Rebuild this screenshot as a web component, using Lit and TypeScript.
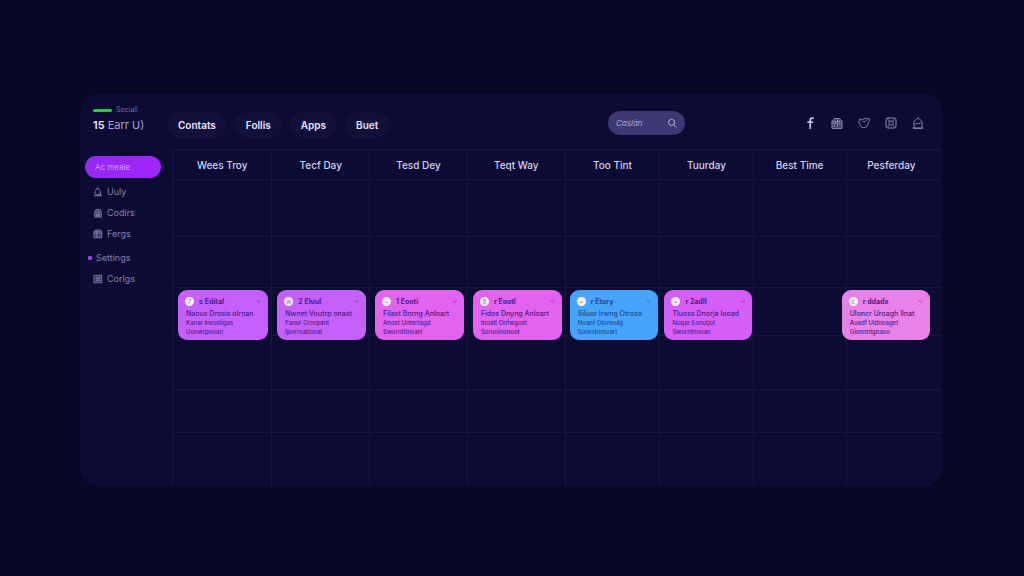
import { LitElement, html, css, svg } from "lit";
import { customElement, property } from "lit/decorators.js";

interface Entry {
  day: string;
  tone?: string;
  mark?: string;
  title?: string;
  lines?: string[];
}

const week: Entry[] = [
  { day: "Wees Troy", tone: "violet", mark: "7", title: "c Edital", lines: ["Naous Drosis olrnan", "Kanar Invosligas", "Uonwrpnoan"] },
  { day: "Tecf Day", tone: "violet", mark: "w", title: "2 Eluul", lines: ["Nwnet Voutrp onast", "Fanor Ornrpant", "Iporrnatlonat"] },
  { day: "Tesd Dey", tone: "orchid", mark: "~", title: "1 Eooti", lines: ["Filast Bnrng Anloart", "Anost Untertagd", "Sworntltnoart"] },
  { day: "Teqt Way", tone: "orchid", mark: "8", title: "r Eootl", lines: ["Fidos Dnyng Anloart", "Inoatt Onfwgost", "Soruoinonoot"] },
  { day: "Too Tint", tone: "blue", mark: "•", title: "r Etory", lines: ["Siluor Irwng Otroso", "Noanf Otoneulg", "Sonrntnmoart"] },
  { day: "Tuurday", tone: "pinkviolet", mark: "•", title: "r 2adll", lines: ["Tluoss Dnorja looad", "Noqar Eonutjol", "Sworntnnoan"] },
  { day: "Best Time" },
  { day: "Pesferday", tone: "rose", mark: "c", title: "r ddadx", lines: ["Uloncr Uroagh Ilnat", "Auadf Uldnoaget", "Gionnntgnaoo"] },
];

const icons: Record<string, unknown> = {
  bell: svg`<path d="M2.500 8.800V5.500a3.200 3.200 0 0 1 6-1.500l.8 4.800zM1.500 10.500h9M5 2V1h1.500M7 10.500V8.300h2"/>`,
  home: svg`<path fill="currentColor" fill-opacity=".45" d="M2 10.500V5.500a4 4 0 0 1 8 0v5zM4 10V7.200h1.500V10M6.500 10V7.200H8V10M4 4.800h4"/>`,
  board: svg`<path fill="currentColor" fill-opacity=".45" d="M1.500 2.500h9v8h-9zM1.500 5h9M4.500 2.500v8M3 1.200h6.500"/>`,
  list: svg`<path fill="currentColor" fill-opacity=".35" d="M1.500 1.500h9v9h-9zM3.500 4h5M3.500 6h5M3.500 8h5"/>`,
  search: svg`<circle cx="5.500" cy="5.200" r="3.700"/><path d="M8.200 7.900 11 11"/>`,
  face: svg`<path stroke-width="1.700" d="M9 1.200H7.900C6.700 1.200 6.200 2 6.200 3v8.500M4 5.200h4.500"/>`,
  globe: svg`<path fill="currentColor" fill-opacity=".4" d="M1 11V4.500L3.500 1.500h5L11 4v7z"/><path d="M3 4.500h2v2H3zM6.500 3v6.500M6.500 4h2.300v4M3.500 8.500v1"/>`,
  bird: svg`<path d="M2 2.200c1.200.7 2.200.6 3.300-.2 1.200-.8 2.700-.6 3.500 0l2.500-.2c.4 1.400 0 2.500-1 3.400C10.200 8.500 8.300 10.600 5.800 10.600 3.600 10.600 2 9 2 6.800.9 6.300.5 5.200.8 4.200c.7-.2 1-.8 1.200-2zM5 4.400c1 .4 2.300.2 3.300-.8"/>`,
  camera: svg`<rect x="1" y="1" width="10" height="10" rx="2"/><rect x="4" y="4" width="4" height="4" rx=".8"/><path d="M3 3h.7M8.300 3H9M3 9h.7M8.300 9H9"/>`,
  tray: svg`<path d="M2 11V4.500L4.500 2 6 1l1.500 1L10 4.500V11zM1 11h10M3.800 7.300l1.500-1.500 1.300 1.500L8.200 5.500"/>`,
};

const icon = (name: string) =>
  html`<svg class="icon" viewBox="0 0 12 12" fill="none" stroke="currentColor" stroke-width="1" stroke-linejoin="round" stroke-linecap="round" aria-hidden="true">${icons[name]}</svg>`;

@customElement("event-card")
class EventCard extends LitElement {
  @property({ attribute: false }) entry!: Entry;

  static styles = css`
    :host { display: block; }
    .card {
      box-sizing: border-box;
      height: 50px;
      padding: 5px 7px 0 7px;
      border-radius: 9px;
      color: #4b1a88;
      font-size: 6px;
      line-height: 9px;
      white-space: nowrap;
      overflow: hidden;
    }
    .violet { background: #c560fb; }
    .orchid { background: #e163ee; }
    .blue { background: #48a4fb; color: #174a90; }
    .pinkviolet { background: #d55ff6; }
    .rose { background: #e982e8; }
    .head { display: flex; align-items: center; height: 12px; gap: 5px; margin-bottom: 2px; }
    .mark {
      width: 9px; height: 9px; border-radius: 50%;
      background: #fbf0ff; color: #9a6fd0;
      font-size: 6px; line-height: 9px; text-align: center;
    }
    .title { flex: 1; font-size: 7px; font-weight: 700; }
    .more { width: 5px; height: 5px; fill: none; stroke: currentColor; opacity: .5; }
    .text { margin: 0; padding-left: 1px; font-weight: 500; font-size: 7px; }
    .soft { font-size: 6px; }
  `;

  render() {
    const { tone, mark, title, lines = [] } = this.entry;
    return html`<article class="card ${tone}">
      <div class="head">
        <span class="mark">${mark}</span><span class="title">${title}</span>
        <svg class="more" viewBox="0 0 5 5"><path d="M1 1.500 2.500 3.500 4.500 1"/></svg>
      </div>
      ${lines.map((l, i) => html`<p class="text ${i ? "soft" : ""}">${l}</p>`)}
    </article>`;
  }
}

@customElement("app-root")
class AppRoot extends LitElement {
  static styles = css`
    :host {
      display: block;
      box-sizing: border-box;
      min-height: 100vh;
      padding: 94px 82px 90px 80px;
      background: #060625;
      color: #d9d5f4;
      font: 500 10px/14px Inter, "Liberation Sans", sans-serif;
    }
    a { color: inherit; text-decoration: none; }
    .icon { width: 10px; height: 10px; flex: none; }
    .panel {
      display: grid;
      grid-template-columns: 92px 1fr;
      grid-template-rows: 55px auto;
      border-radius: 18px;
      background: #0c0b33;
      overflow: hidden;
    }
    .brand { padding: 11px 0 0 13px; }
    .status { display: flex; align-items: center; gap: 4px; height: 10px; font-size: 7px; font-weight: 400; color: #6f6c9b; }
    .bar { width: 19px; height: 3px; border-radius: 2px; background: #2cc63f; }
    .name { margin: 3px 0 0; font-size: 11px; line-height: 14px; font-weight: 400; color: #a9a6cf; white-space: nowrap; }
    .name b { font-weight: 600; color: #ebe8ff; }
    .top { display: flex; align-items: center; padding: 3px 18px 0 0; }
    .tabs { display: flex; gap: 8px; margin: 3px 0 0 -5px; }
    .tab {
      padding: 0 11px; height: 26px; line-height: 26px;
      border-radius: 13px; background: #11103b;
      color: #e9e6fb; font-weight: 600;
    }
    .search {
      display: flex; align-items: center;
      box-sizing: border-box; width: 77px; height: 24px;
      margin-left: auto; padding: 0 8px;
      border-radius: 12px; background: #3b3872; color: #c4c0ec;
    }
    .search input {
      flex: 1; min-width: 0; padding: 0; border: 0; outline: 0;
      background: none; color: inherit; font: italic 400 8px/12px Inter, sans-serif;
    }
    .search input::placeholder { color: #aaa6d8; opacity: 1; }
    .social { display: flex; gap: 15px; margin-left: 119px; color: #8d8aba; }
    .social a { display: flex; }
    .social .icon { width: 12px; height: 12px; }
    .social a:first-child { color: #c2bfe6; }
    .side { display: flex; flex-direction: column; padding: 7px 11px 0 5px; font-size: 8px; font-weight: 400; color: #8481af; }
    .current {
      height: 22px; line-height: 22px; padding: 0 10px; margin-bottom: 3px;
      border-radius: 11px; background: linear-gradient(90deg, #9229f2, #a025fb); color: #d29dfb;
    }
    .item { display: flex; align-items: center; gap: 4px; height: 21px; padding-left: 8px; }
    .section { display: flex; align-items: center; gap: 4px; height: 21px; margin-top: 3px; padding-left: 3px; }
    .section, .item { font-size: 9px; }
    .dot { width: 4px; height: 4px; border-radius: 1px; background: #9445e0; }
    .week { width: 100%; height: 337px; table-layout: fixed; border-collapse: separate; border-spacing: 0; }
    .week th, .week td { padding: 0; border: solid #17163f; border-width: 1px 0 0 1px; vertical-align: top; }
    .week th { height: 29px; vertical-align: middle; font-weight: 500; color: #d5d1f2; }
    .week th:last-child { padding-right: 6px; }
    .c99 { width: 12.9%; } .c98 { width: 12.7%; } .c95 { width: 12.3%; } .c93 { width: 12.1%; }
    .r57 td { height: 56px; } .r51 td { height: 50px; } .r48 td { height: 47px; }
    .r54 td { height: 53px; } .r43 td { height: 42px; }
    event-card { position: relative; margin: 2px 3px -5px 5px; }
    .narrow { margin: 2px 1px -5px 4px; }
    .early { margin: 2px 12px -5px -5px; }
  `;

  render() {
    const row = (cls: string) => html`<tr class=${cls}>${week.map(() => html`<td></td>`)}</tr>`;
    const fit = (i: number) => (i === 7 ? "early" : i > 3 ? "narrow" : "");
    return html`<div class="panel">
      <div class="brand">
        <div class="status"><span class="bar"></span>Sociall</div>
        <h1 class="name"><b>15</b> Earr U)</h1>
      </div>
      <header class="top">
        <nav class="tabs">
          ${["Contats", "Follis", "Apps", "Buet"].map((t) => html`<a class="tab" href="#">${t}</a>`)}
        </nav>
        <label class="search"><input type="search" placeholder="Caslán" aria-label="Search" />${icon("search")}</label>
        <div class="social">
          ${["face", "globe", "bird", "camera", "tray"].map((n) => html`<a href="#" aria-label=${n}>${icon(n)}</a>`)}
        </div>
      </header>
      <nav class="side">
        <a class="current" href="#">Ac meale</a>
        <a class="item" href="#">${icon("bell")}Uuly</a>
        <a class="item" href="#">${icon("home")}Codirs</a>
        <a class="item" href="#">${icon("board")}Fergs</a>
        <a class="section" href="#"><span class="dot"></span>Settings</a>
        <a class="item" href="#">${icon("list")}Corlgs</a>
      </nav>
      <table class="week">
        <colgroup>
          <col class="c99" /><col class="c98" /><col class="c98" /><col class="c98" />
          <col class="c95" /><col class="c93" /><col class="c93" /><col />
        </colgroup>
        <thead><tr>${week.map((d) => html`<th scope="col">${d.day}</th>`)}</tr></thead>
        <tbody>
          ${row("r57")}${row("r51")}
          <tr class="r48">
            ${week.map((d, i) => html`<td>${d.title ? html`<event-card class=${fit(i)} .entry=${d}></event-card>` : ""}</td>`)}
          </tr>
          ${row("r54")}${row("r43")}${row("r54")}
        </tbody>
      </table>
    </div>`;
  }
}
